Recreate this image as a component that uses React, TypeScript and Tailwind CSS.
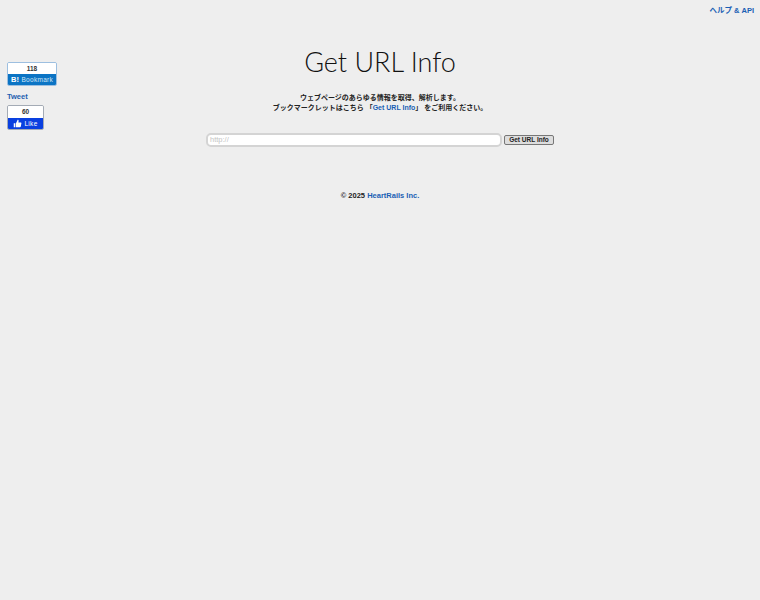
export default function App() {
  const sans = "font-['Liberation_Sans','Noto_Sans_CJK_JP',sans-serif]";
  return (
    <div className={`h-[600px] w-[760px] overflow-hidden bg-[#eeeeee] text-[7.5px] font-bold leading-[10px] text-[#222222] ${sans}`}>
      <div className="flex h-[62px] justify-end pr-[6px] pt-[5px]">
        <a className="text-[7.5px] leading-[11px] text-[#1a5fb4]">ヘルプ &amp; API</a>
      </div>
      <div className="grid grid-cols-[1fr_360px_1fr]">
        <div className="pl-[7px]">
          <div className="w-[50px] overflow-hidden rounded-[2px] border border-[#9dbfe0]">
            <div className="h-[11px] bg-white text-center text-[6.5px] leading-[11px] text-[#333333]">118</div>
            <div className="flex h-[11px] items-center justify-center gap-[2px] bg-[#0b74c4] text-[6.5px] font-normal tracking-[0.3px] text-[#cfe6f7]">
              <span className="text-[7.5px] font-bold text-white">B!</span>
              <span>Bookmark</span>
            </div>
          </div>
          <a className="mt-[5px] block text-[7.5px] leading-[11px] text-[#1f5fb0]">Tweet</a>
          <div className="mt-[3px] w-[37px] overflow-hidden rounded-[2px] border border-[#a4abb5]">
            <div className="h-[12px] bg-white text-center text-[6.5px] leading-[12px] text-[#333333]">60</div>
            <div className="flex h-[11px] items-center justify-center gap-[2px] bg-[#0a40e0] text-[6.5px] font-normal tracking-[0.3px] text-white">
              <svg viewBox="0 0 12 12" className="h-[9px] w-[9px]" fill="white">
                <path d="M1 5.5h2.2V11H1zM4 5.5 6.2 1c.9 0 1.4.6 1.3 1.5L7.2 4.6h3c.7 0 1.1.6 1 1.2l-.8 4.2c-.1.6-.5 1-1.1 1H4z" />
              </svg>
              <span>Like</span>
            </div>
          </div>
        </div>
        <div className="-mx-[30px] flex flex-col items-center">
          <h1 className="-mt-[18px] font-['Lato',sans-serif] text-[27px] font-light leading-[36px] text-[#111111]">Get URL Info</h1>
          <p className="mt-[13px] text-center text-[7px] leading-[9.5px]">
            ウェブページのあらゆる情報を取得、解析します。
            <br />
            ブックマークレットはこちら 「<a className="text-[#1a5fb4]">Get URL Info</a>」 をご利用ください。
          </p>
          <div className="mt-[21px] flex items-center gap-[2px]">
            <div className="flex h-[14px] w-[296px] items-center rounded-[5px] border-2 border-[#d4d4d4] bg-white pl-[2px] text-[7.5px] font-normal text-[#c4c4c4]">http://</div>
            <button className="h-[10px] w-[50px] rounded-[2px] border border-[#777777] bg-[#dddddd] text-[6.5px] leading-[8px] text-[#222222]">Get URL Info</button>
          </div>
          <p className="mt-[43px] text-[7.5px] leading-[11px]">
            © 2025 <a className="text-[#1a5fb4]">HeartRails Inc.</a>
          </p>
        </div>
        <div />
      </div>
    </div>
  );
}
